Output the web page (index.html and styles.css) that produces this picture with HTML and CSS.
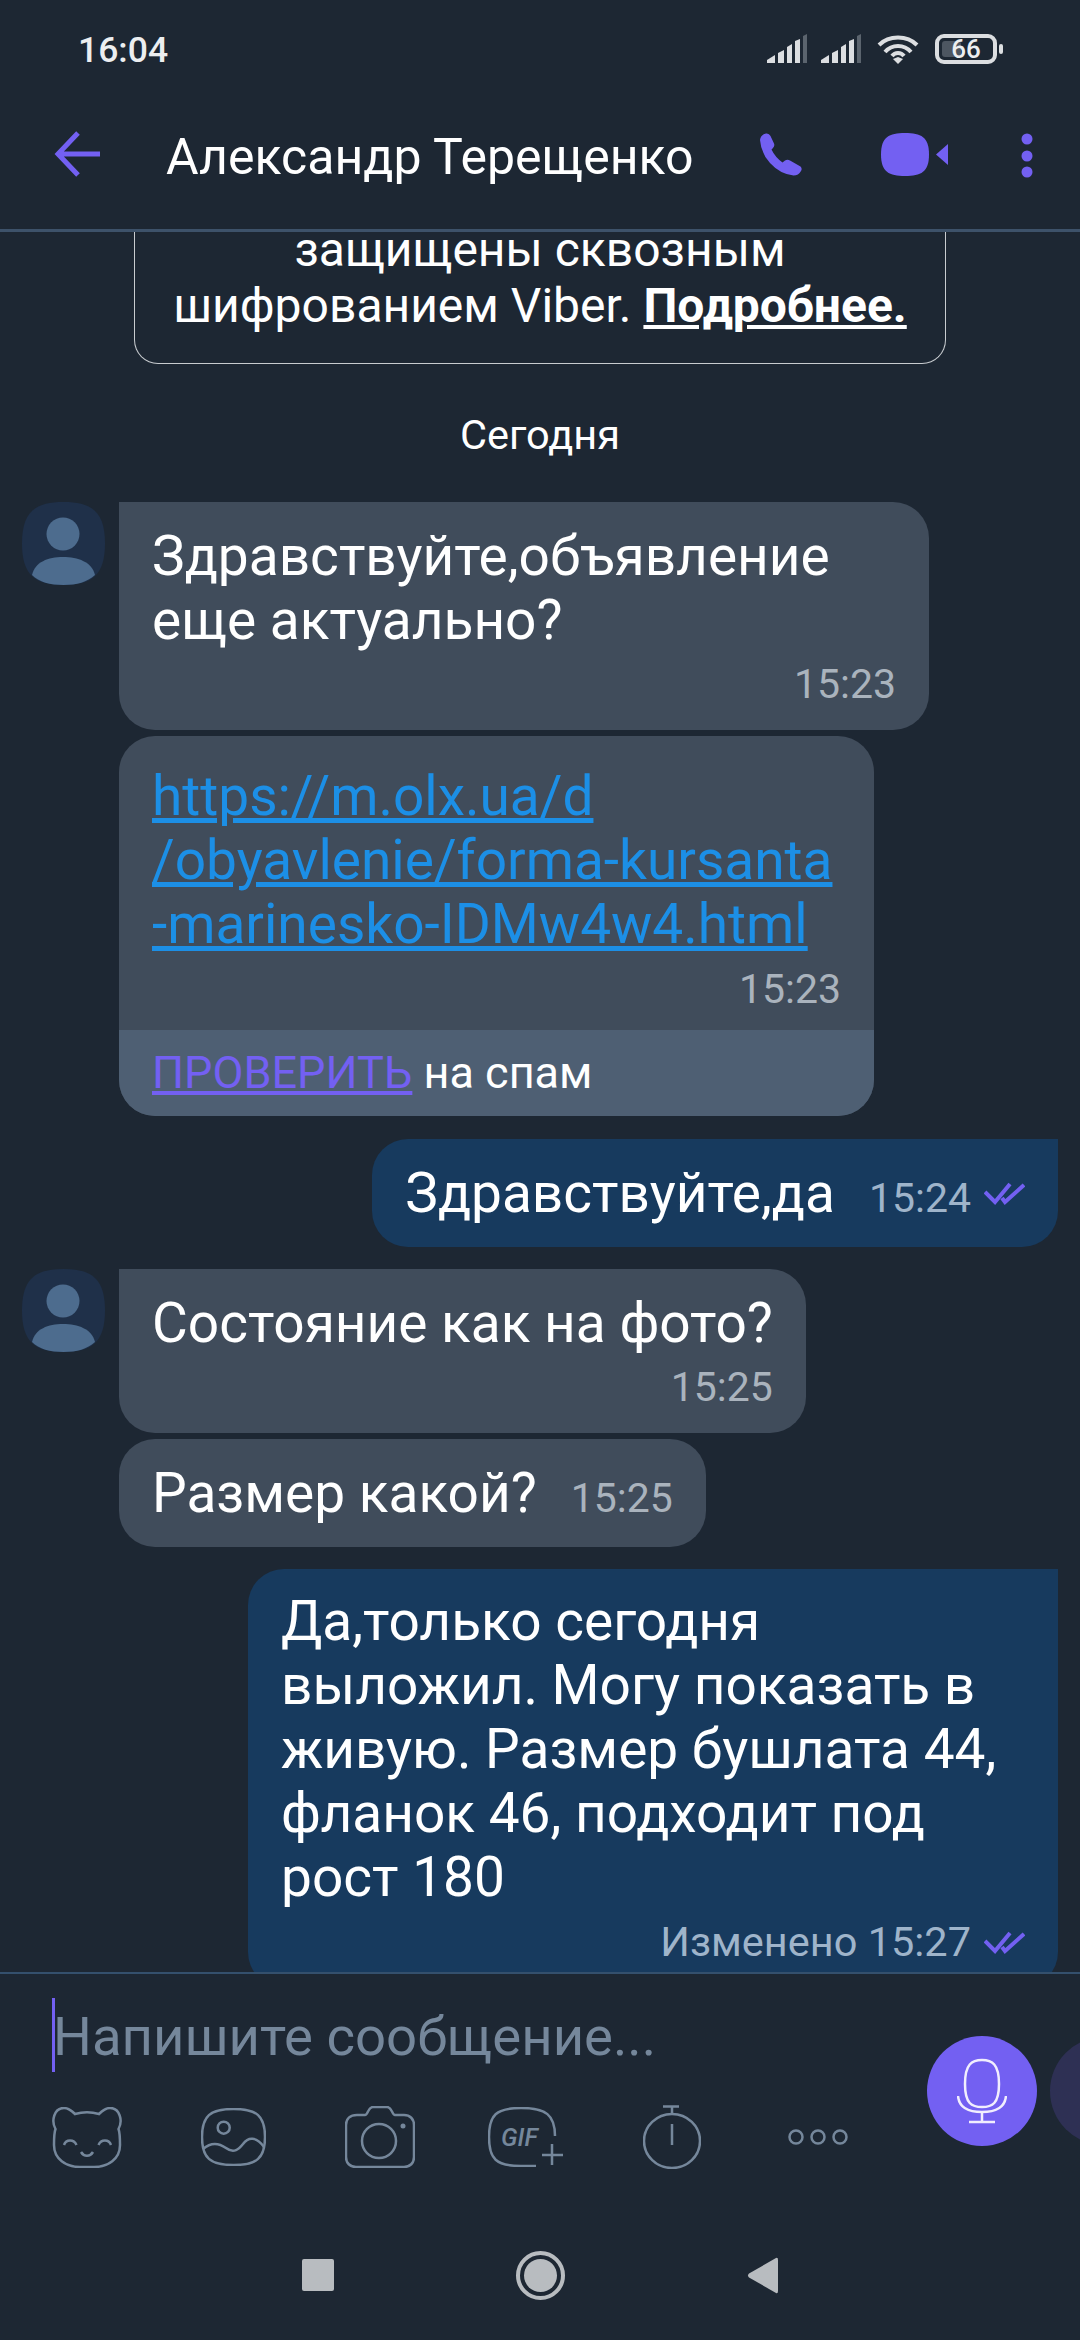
FILE: index.html
```html
<!doctype html>
<html lang="ru">
<head>
	<meta charset="utf-8">
	<title>Александр Терещенко</title>
	<link rel="stylesheet" href="styles.css">
</head>
<body>
<div class="screen">

	<div class="statusbar">
		<span class="clock">16:04</span>
		<div class="status-icons">
			<svg class="sig" width="40" height="29" viewBox="0 0 40 29"><polygon class="on" points="0,29 0,26 8,21 8,29"/><polygon class="on" points="11,29 11,19 17,16 17,29"/><polygon class="on" points="20,29 20,13 25,10 25,29"/><polygon class="on" points="28,29 28,7 33,5 33,29"/><polygon class="off" points="36,29 36,2 40,0 40,29"/></svg>
			<svg class="sig" width="40" height="29" viewBox="0 0 40 29"><polygon class="on" points="0,29 0,26 8,21 8,29"/><polygon class="on" points="11,29 11,19 17,16 17,29"/><polygon class="on" points="20,29 20,13 25,10 25,29"/><polygon class="on" points="28,29 28,7 33,5 33,29"/><polygon class="off" points="36,29 36,2 40,0 40,29"/></svg>
			<svg class="wifi" width="42" height="30" viewBox="0 0 42 30"><path d="M2 11C12 1 30 1 40 11M8 18C15 10 27 10 34 18"/><path d="M15 22C18 18 24 18 27 22"/><polygon points="21,30 16,25 21,23 26,25"/></svg>
			<svg class="batt" width="68" height="30" viewBox="0 0 68 30"><rect class="batt-body" x="2" y="2" width="58" height="26" rx="7"/><rect class="batt-fill" x="7" y="7" width="19" height="16" rx="3"/><rect class="batt-nub" x="64" y="10" width="4" height="10" rx="2"/><text class="batt-num" x="31" y="24" text-anchor="middle">66</text></svg>
		</div>
	</div>

	<header class="appbar">
		<svg class="ico-back" width="46" height="46" viewBox="0 0 46 46"><path d="M46 23H5M24 2L4 23L24 44"/></svg>
		<h1 class="title">Александр Терещенко</h1>
		<svg class="ico-phone" width="44" height="43" viewBox="0 0 44 43"><path d="M1 7Q1.500 2 7 .5Q10 0 11.500 3L15 10.500Q16 13 14 15L12.500 16.500Q16 24 23.500 29.500L26 27.500Q28.500 26 31 27.500L41.500 33.500Q43.500 35.500 42 38Q39.500 42.500 34.500 42.500Q21 41 11 30Q2 20 1 7Z"/></svg>
		<svg class="ico-video" width="68" height="43" viewBox="0 0 68 43"><path d="M24 0C40 0 48 4 48 21.500C48 39 40 43 24 43C8 43 0 39 0 21.500C0 4 8 0 24 0Z"/><path d="M55 21.500L67 11V32Z"/></svg>
		<svg class="ico-more" width="12" height="46" viewBox="0 0 12 46"><circle cx="6" cy="6" r="5.500"/><circle cx="6" cy="23" r="5.500"/><circle cx="6" cy="39" r="5.500"/></svg>
	</header>

	<main class="chat">
		<div class="notice">
			<div class="notice-first">защищены сквозным</div>
			<div>шифрованием Viber. <a class="notice-link">Подробнее.</a></div>
		</div>

		<div class="date">Сегодня</div>

		<div class="row">
			<svg class="avatar" width="83" height="83" viewBox="0 0 83 83"><path class="avatar-bg" d="M41.500 0C70 0 83 10 83 41.500C83 73 70 83 41.500 83C13 83 0 73 0 41.500C0 10 13 0 41.500 0Z"/><circle class="avatar-fg" cx="41" cy="32" r="16.500"/><path class="avatar-fg" d="M10 73C13 60 26 55 41 55C56 55 70 60 73 73C65 80 55 83 41.500 83C28 83 17 80 10 73Z"/></svg>
			<div class="bubble in corner-tl b-wide">
				<div class="text">Здравствуйте,объявление<br>еще актуально?</div>
				<div class="time time-below">15:23</div>
			</div>
		</div>

		<div class="row cont">
			<div class="bubble in b-link">
				<div class="link-body">
					<a class="text url">https://m.olx.ua/d<br>/obyavlenie/forma-kursanta<br>-marinesko-IDMw4w4.html</a>
					<div class="time time-below">15:23</div>
				</div>
				<div class="spam"><a class="spam-link">ПРОВЕРИТЬ</a> на спам</div>
			</div>
		</div>

		<div class="row out after-link">
			<div class="bubble sent corner-tr inline">
				<div class="text">Здравствуйте,да</div>
				<div class="time">15:24</div>
				<svg class="ticks" width="41" height="23" viewBox="0 0 41 23"><path class="tick-a" d="M1 10L11 20L26 2"/><path class="tick-b" d="M18 16L21 20L40 3"/></svg>
			</div>
		</div>

		<div class="row">
			<svg class="avatar" width="83" height="83" viewBox="0 0 83 83"><path class="avatar-bg" d="M41.500 0C70 0 83 10 83 41.500C83 73 70 83 41.500 83C13 83 0 73 0 41.500C0 10 13 0 41.500 0Z"/><circle class="avatar-fg" cx="41" cy="32" r="16.500"/><path class="avatar-fg" d="M10 73C13 60 26 55 41 55C56 55 70 60 73 73C65 80 55 83 41.500 83C28 83 17 80 10 73Z"/></svg>
			<div class="bubble in corner-tl">
				<div class="text">Состояние как на фото?</div>
				<div class="time time-below">15:25</div>
			</div>
		</div>

		<div class="row cont">
			<div class="bubble in inline">
				<div class="text">Размер какой?</div>
				<div class="time">15:25</div>
			</div>
		</div>

		<div class="row out">
			<div class="bubble sent corner-tr b-wide b-long">
				<div class="text">Да,только сегодня<br>выложил. Могу показать в<br>живую. Размер бушлата 44,<br>фланок 46, подходит под<br>рост 180</div>
				<div class="meta-line">
					<div class="time time-edited">Изменено 15:27</div>
					<svg class="ticks" width="41" height="23" viewBox="0 0 41 23"><path class="tick-a" d="M1 10L11 20L26 2"/><path class="tick-b" d="M18 16L21 20L40 3"/></svg>
				</div>
			</div>
		</div>
	</main>

	<footer class="composer">
		<div class="input-line">
			<span class="caret"></span>
			<span class="placeholder">Напишите сообщение...</span>
		</div>
		<div class="tools">
			<svg width="70" height="61" viewBox="0 0 70 61"><path d="M3.500 22C-1 14 2 1 12 1C17 1 20 4 23 7C30 5 40 5 47 7C50 4 54 1 58 1C68 1 71 14 66.500 22C68 26 68 32 68 38C68 52 56 60 42 60L28 60C14 60 2 52 2 38C2 32 2 26 3.500 22Z"/><path d="M12 38C14 32 22 32 24.500 38M46.500 38C49 32 57 32 59 38M29 45C32 50 38 50 41 45"/></svg>
			<svg width="65" height="58" viewBox="0 0 65 58"><path d="M32.500 1C56 1 64 8 64 29C64 50 56 57 32.500 57C9 57 1 50 1 29C1 8 9 1 32.500 1Z"/><circle cx="22.700" cy="19.700" r="6"/><path d="M2 41C10 34 18 35 25 40C33 46 38 41 42 36C47 29 55 28 63 39"/></svg>
			<svg width="70" height="62" viewBox="0 0 70 62"><path d="M12 9L20 9C23 9 23 1 28 1L42 1C47 1 47 9 50 9L59 9C65 9 69 13 69 19L69 51C69 57 65 61 59 61L11 61C5 61 1 57 1 51L1 19C1 13 5 9 12 9Z"/><circle cx="34" cy="35" r="17"/><circle class="solid" cx="58" cy="20" r="2.500"/></svg>
			<svg class="t-gif" width="76" height="60" viewBox="0 0 76 60"><path d="M67 29C67 8 58 1 33 1C8 1 1 8 1 30C1 52 8 59 33 59L48 59M54 48H75M64 37V58"/><text class="gif-label" x="13" y="39">GIF</text></svg>
			<svg width="58" height="64" viewBox="0 0 58 64"><ellipse cx="29" cy="36" rx="28" ry="27"/><path d="M20 1.500H36M29 2V9M29 19V40"/></svg>
			<svg class="t-dots" width="60" height="18" viewBox="0 0 60 18"><circle cx="8" cy="9" r="6.500"/><circle cx="30" cy="9" r="6.500"/><circle cx="52" cy="9" r="6.500"/></svg>
		</div>
		<button class="mic">
			<svg width="50" height="66" viewBox="0 0 50 66"><path d="M25 2C35 2 42 6 42 26C42 46 35 49 25 49C15 49 8 46 8 26C8 6 15 2 25 2Z"/><path d="M1 38C2 50 12 54 25 54C38 54 48 50 49 38M25 54V63M12 64H38"/></svg>
		</button>
		<div class="next-btn"></div>
	</footer>

	<nav class="navbar">
		<span class="nav-square"></span>
		<span class="nav-home"><span class="nav-home-dot"></span></span>
		<svg class="nav-back" width="31" height="37" viewBox="0 0 31 37"><path d="M29 1Q31 0 31 3V34Q31 37 29 36L2 20.500Q0 18.500 2 16.500Z"/></svg>
	</nav>

</div>
</body>
</html>
```

FILE: styles.css
```css
* {
	box-sizing: border-box;
}

body {
	margin: 0;
	background: #1d2733;
	font-family: Roboto, "Liberation Sans", sans-serif;
	color: #fff;
}

.screen {
	width: 1080px;
	height: 2340px;
	overflow: hidden;
	display: flex;
	flex-direction: column;
}

/* status bar */
.statusbar {
	height: 100px;
	flex: none;
	display: flex;
	justify-content: space-between;
	padding: 32px 77px 0 78px;
}

.clock {
	font-size: 35.500px;
	line-height: 36px;
	font-weight: 500;
	color: #eceef0;
}

.status-icons {
	display: flex;
	align-items: flex-start;
	gap: 14px;
	padding-top: 2px;
}

.sig .on { fill: #dcdee1; }
.sig .off { fill: #5b646e; }

.wifi { margin-right: 2px; margin-left: 2px; }
.wifi path { fill: none; stroke: #dcdee1; stroke-width: 4; }
.wifi polygon { fill: #dcdee1; }

.batt-body { fill: none; stroke: #dcdee1; stroke-width: 4; }
.batt-fill { fill: #4d5661; }
.batt-nub { fill: #dcdee1; }
.batt-num { font-size: 26px; font-weight: 500; fill: #eceef0; }

/* header */
.appbar {
	height: 132px;
	flex: none;
	display: flex;
	align-items: flex-start;
	padding: 32px 0 0 54px;
	border-bottom: 3px solid #3d526a;
}

.title {
	margin: 0 0 0 66px;
	width: 593px;
	font-size: 50px;
	font-weight: 400;
	line-height: 50px;
	white-space: nowrap;
}

.ico-back { fill: none; stroke: #7360f2; stroke-width: 5; margin-top: -1px; }
.ico-phone { fill: #7360f2; margin-top: 1px; }
.ico-video { fill: #7360f2; margin: 1px 0 0 78px; }
.ico-more { fill: #7360f2; margin: 1px 0 0 72px; }

/* chat: the last bubble runs on under the composer */
.chat {
	height: 1740px;
	flex: none;
}

.notice {
	width: 812px;
	margin: 0 auto;
	padding-bottom: 29px;
	border: 1px solid #c8ccd0;
	border-top: 0;
	border-radius: 0 0 24px 24px;
	font-size: 48px;
	line-height: 56px;
	text-align: center;
}

.notice-first {
	line-height: 36px;
	margin-bottom: 10px;
}

.notice-link {
	font-weight: 700;
	text-decoration: underline;
}

.date {
	margin: 47px 0 43px;
	font-size: 41.500px;
	line-height: 48px;
	text-align: center;
}

.row {
	display: flex;
	align-items: flex-start;
	gap: 14px;
	margin-top: 22px;
	padding: 0 22px;
}

.date + .row { margin-top: 0; }

.row.cont {
	margin-top: 6px;
	padding-left: 119px;
}

.row.out {
	justify-content: flex-end;
}

.row.after-link { margin-top: 23px; }

.avatar { flex: none; }
.avatar-bg { fill: #1f3049; }
.avatar-fg { fill: #4d6c8e; }

.bubble {
	border-radius: 36px;
	padding: 22px 33px 23px;
}

.bubble.in { background: #404c5b; }
.bubble.sent { background: #173a5e; }
.corner-tl { border-top-left-radius: 0; }
.corner-tr { border-top-right-radius: 0; }

.b-wide { width: 810px; }
.b-link { width: 755px; padding: 0; overflow: hidden; }
.bubble.b-long { padding-top: 20px; }

.bubble.inline {
	display: flex;
	align-items: baseline;
	padding-bottom: 22px;
}

.text {
	font-size: 55px;
	line-height: 64px;
	white-space: nowrap;
}

.time {
	font-size: 41px;
	line-height: 46px;
	color: #aab3bd;
	white-space: nowrap;
}

.time-edited { font-size: 41.500px; }

.inline .time { margin-left: 34px; }
.sent .time { color: #9fb4ca; }

.time-below {
	margin-top: 9px;
	text-align: right;
}

.ticks {
	flex: none;
	margin-left: 13px;
	fill: none;
	stroke: #7360f2;
	stroke-width: 4;
	align-self: center;
}

.meta-line {
	display: flex;
	justify-content: flex-end;
	align-items: center;
	margin-top: 10px;
}

.link-body {
	padding: 28px 33px 18px;
}

.link-body .time-below { margin-top: 10px; }

.url {
	display: block;
	color: #1c8fe6;
	text-decoration: underline;
}

.spam {
	height: 86px;
	padding: 0 33px;
	background: #4e5f73;
	font-size: 45px;
	line-height: 86px;
}

.spam-link {
	color: #7360f2;
	text-decoration: underline;
}

/* composer */
.composer {
	position: relative;
	flex: none;
	height: 228px;
	padding: 24px 0 0 52px;
	border-top: 2px solid #34506d;
	background: #1d2733;
}

.input-line {
	display: flex;
	align-items: center;
	height: 74px;
}

.caret {
	width: 3px;
	height: 74px;
	margin-right: -2px;
	background: #7360f2;
}

.placeholder {
	padding-top: 2px;
	font-size: 54.500px;
	white-space: nowrap;
	color: #75879b;
}

.tools {
	display: flex;
	align-items: center;
	gap: 79px;
	height: 64px;
	margin-top: 33px;
}

.tools svg {
	flex: none;
	fill: none;
	stroke: #75879b;
	stroke-width: 2.500;
}

.tools .solid { fill: #75879b; stroke: none; }
.tools .t-gif { margin-left: -6px; }
.tools .t-dots { margin-left: 8px; }

.gif-label {
	font-size: 25px;
	font-weight: 500;
	font-style: italic;
	fill: #75879b;
	stroke: none;
}

.mic {
	position: absolute;
	left: 927px;
	top: 62px;
	width: 110px;
	height: 110px;
	padding: 0;
	display: flex;
	align-items: center;
	justify-content: center;
	border: 0;
	border-radius: 50%;
	background: #7360f2;
}

.mic svg {
	fill: none;
	stroke: #f1eefe;
	stroke-width: 2.500;
}

.next-btn {
	position: absolute;
	left: 1050px;
	top: 63px;
	width: 108px;
	height: 108px;
	border-radius: 50%;
	background: #2e3054;
}

/* android nav */
.navbar {
	display: flex;
	align-items: center;
	justify-content: center;
	gap: 182px;
	padding-top: 10px;
	height: 140px;
}

.nav-square {
	width: 32px;
	height: 32px;
	border-radius: 2px;
	background: #b8bcc0;
}

.nav-home {
	width: 49px;
	height: 49px;
	display: flex;
	align-items: center;
	justify-content: center;
	border: 4px solid #b8bcc0;
	border-radius: 50%;
}

.nav-home-dot {
	width: 33px;
	height: 33px;
	border-radius: 50%;
	background: #b8bcc0;
}

.nav-back { fill: #b8bcc0; }
```
